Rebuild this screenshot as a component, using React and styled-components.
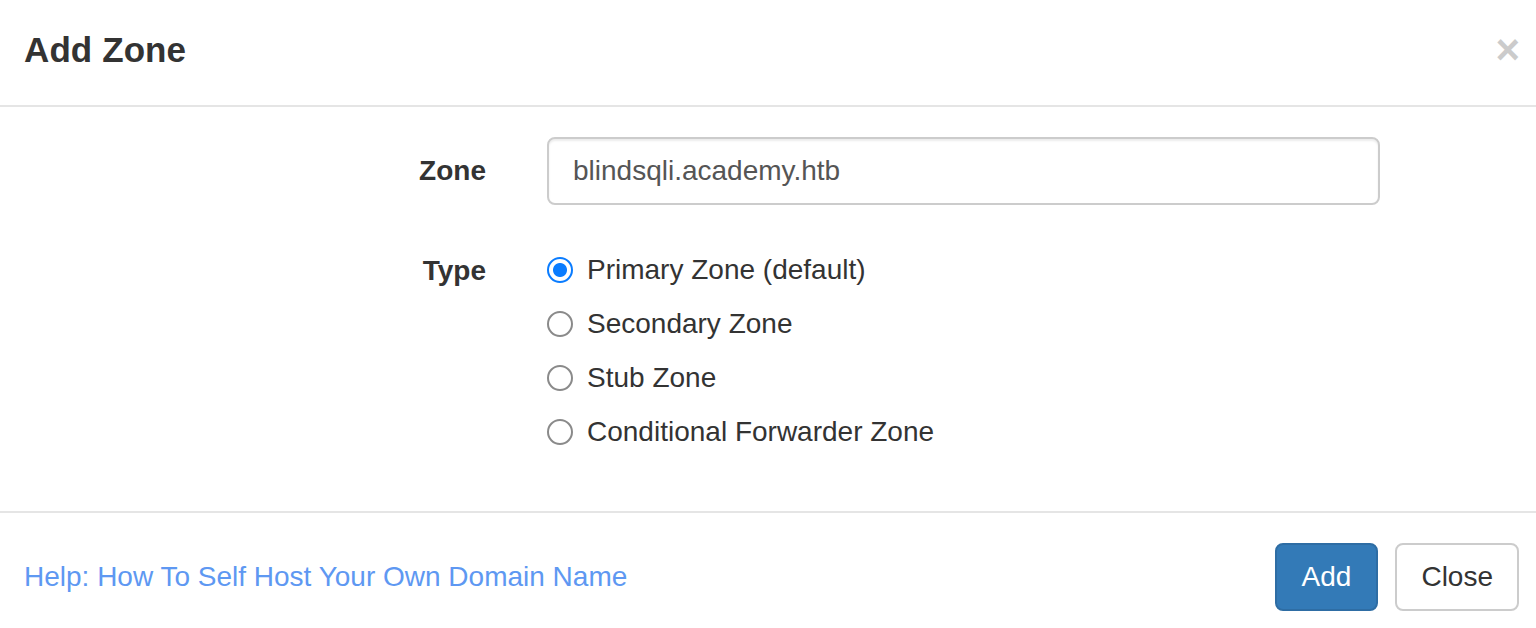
import React from "react";
import styled, { createGlobalStyle } from "styled-components";

const Global = createGlobalStyle`
  html, body { margin: 0; padding: 0; background: #fff; }
  body { font-family: "Liberation Sans", Arial, Helvetica, sans-serif; color: #333; }
  * { box-sizing: border-box; }
`;

const Modal = styled.div`
  width: 1536px;
  height: 628px;
  background: #fff;
  display: flex;
  flex-direction: column;
`;

const Header = styled.div`
  flex: 0 0 107px;
  border-bottom: 2px solid #e5e5e5;
  display: flex;
  align-items: center;
  justify-content: space-between;
  padding: 0 16px 6px 24px;
`;

const Title = styled.h4`
  margin: 0;
  font-size: 35px;
  font-weight: 700;
  color: #333;
  letter-spacing: 0.1px;
`;

const CloseX = styled.button`
  border: 0;
  background: none;
  padding: 0;
  font-family: "Liberation Sans", Arial, sans-serif;
  font-size: 42px;
  font-weight: 700;
  line-height: 1;
  color: #000;
  opacity: 0.2;
  cursor: pointer;
`;

const Body = styled.div`
  flex: 0 0 406px;
  border-bottom: 2px solid #e5e5e5;
  padding-top: 30px;
  display: grid;
  grid-template-columns: 486px 833px;
  column-gap: 61px;
  row-gap: 38px;
  align-content: start;
`;

const Label = styled.label`
  font-size: 28px;
  font-weight: 700;
  color: #333;
  text-align: right;
  align-self: ${(p) => (p.$top ? "start" : "center")};
  line-height: ${(p) => (p.$top ? "54px" : "normal")};
  margin-top: ${(p) => (p.$top ? "1px" : "0")};
`;

const Input = styled.input`
  height: 68px;
  width: 100%;
  border: 2px solid #ccc;
  border-radius: 8px;
  padding: 0 24px;
  font-family: "Liberation Sans", Arial, sans-serif;
  font-size: 28px;
  color: #555;
  box-shadow: inset 0 2px 2px rgba(0, 0, 0, 0.075);
  outline: none;
`;

const RadioList = styled.div`
  display: flex;
  flex-direction: column;
`;

const RadioRow = styled.label`
  height: 54px;
  display: flex;
  align-items: center;
  gap: 14px;
  font-size: 28px;
  color: #333;
`;

const Radio = styled.input.attrs({ type: "radio" })`
  appearance: none;
  -webkit-appearance: none;
  margin: 0;
  width: 26px;
  height: 26px;
  border-radius: 50%;
  border: 2px solid #8a8a8a;
  background: #fff;
  flex: none;
  &:checked {
    border: 2px solid #0a7cff;
    background: radial-gradient(circle, #0a7cff 0 6.5px, #fff 7.5px);
  }
`;

const Footer = styled.div`
  flex: 1;
  display: flex;
  align-items: center;
  justify-content: space-between;
  padding: 12px 17px 0 24px;
`;

const HelpLink = styled.a`
  font-size: 28px;
  color: #5e98f2;
  text-decoration: none;
`;

const Buttons = styled.div`
  display: flex;
  gap: 17px;
`;

const Button = styled.button`
  height: 68px;
  padding: 0 ${(p) => (p.$primary ? "25px" : "24px")};
  font-family: "Liberation Sans", Arial, sans-serif;
  font-size: 28px;
  border-radius: 8px;
  border: 2px solid ${(p) => (p.$primary ? "#2e6da4" : "#ccc")};
  background: ${(p) => (p.$primary ? "#337ab7" : "#fff")};
  color: ${(p) => (p.$primary ? "#fff" : "#333")};
  cursor: pointer;
`;

const options = [
  "Primary Zone (default)",
  "Secondary Zone",
  "Stub Zone",
  "Conditional Forwarder Zone",
];

export default function App() {
  return (
    <>
      <Global />
      <Modal>
        <Header>
          <Title>Add Zone</Title>
          <CloseX aria-label="Close">×</CloseX>
        </Header>
        <Body>
          <Label htmlFor="zone">Zone</Label>
          <Input id="zone" defaultValue="blindsqli.academy.htb" />
          <Label $top>Type</Label>
          <RadioList>
            {options.map((o, i) => (
              <RadioRow key={o}>
                <Radio name="type" defaultChecked={i === 0} />
                {o}
              </RadioRow>
            ))}
          </RadioList>
        </Body>
        <Footer>
          <HelpLink href="#">Help: How To Self Host Your Own Domain Name</HelpLink>
          <Buttons>
            <Button $primary>Add</Button>
            <Button>Close</Button>
          </Buttons>
        </Footer>
      </Modal>
    </>
  );
}
